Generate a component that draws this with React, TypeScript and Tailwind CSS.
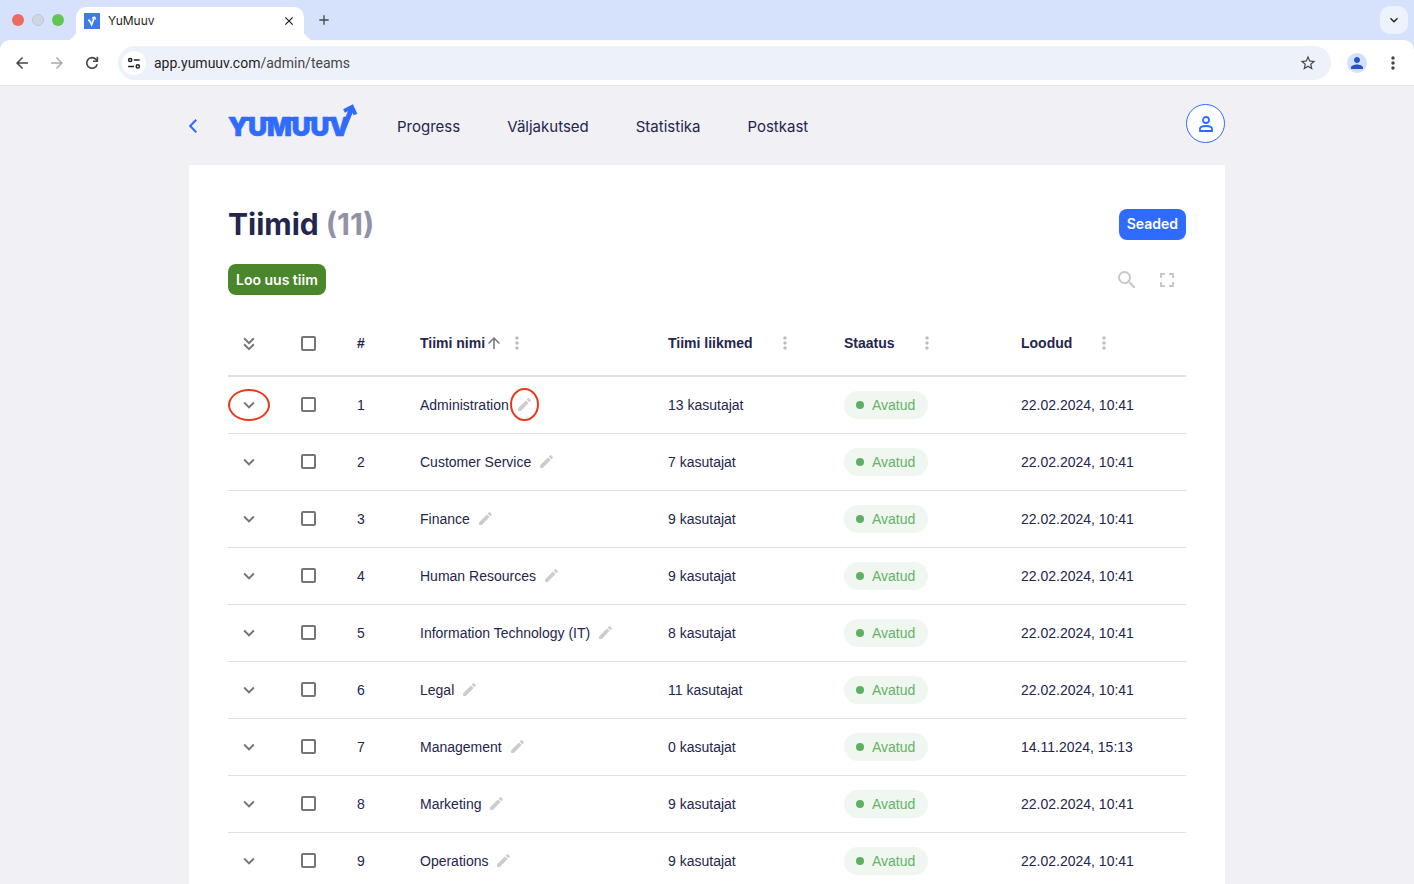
import type { ReactNode } from "react";
import { MdArrowBack, MdArrowForward, MdArrowUpward, MdAdd, MdClose, MdEdit, MdExpandMore, MdFullscreen, MdKeyboardDoubleArrowDown, MdMoreVert, MdPerson, MdSearch, MdStarBorder } from "react-icons/md";

type Team = { id: number; name: string; members: number; created: string };

const teams: Team[] = [
  { id: 1, name: "Administration", members: 13, created: "22.02.2024, 10:41" },
  { id: 2, name: "Customer Service", members: 7, created: "22.02.2024, 10:41" },
  { id: 3, name: "Finance", members: 9, created: "22.02.2024, 10:41" },
  { id: 4, name: "Human Resources", members: 9, created: "22.02.2024, 10:41" },
  { id: 5, name: "Information Technology (IT)", members: 8, created: "22.02.2024, 10:41" },
  { id: 6, name: "Legal", members: 11, created: "22.02.2024, 10:41" },
  { id: 7, name: "Management", members: 0, created: "14.11.2024, 15:13" },
  { id: 8, name: "Marketing", members: 9, created: "22.02.2024, 10:41" },
  { id: 9, name: "Operations", members: 9, created: "22.02.2024, 10:41" },
];

const navLinks = ["Progress", "Väljakutsed", "Statistika", "Postkast"];

function TuneIcon() {
  return (
    <svg viewBox="0 0 14 14" className="size-3.5" fill="none" stroke="currentColor" strokeWidth="1.5">
      <circle cx="3.2" cy="4" r="1.6" />
      <path d="M6.8 4H12.6M1.2 10.4H7" />
      <circle cx="10.8" cy="10.4" r="1.6" />
    </svg>
  );
}

function ReloadIcon() {
  return (
    <svg viewBox="0 0 18 18" className="size-[18px]" fill="none" stroke="currentColor" strokeWidth="1.6">
      <path d="M14.2 10.2A5.3 5.3 0 1 1 13 5.4L14.4 7" />
      <path d="M14.4 2.8V7.2H10" />
    </svg>
  );
}

function PersonIcon() {
  return (
    <svg viewBox="0 0 14 16" className="h-4 w-3.5" fill="none" stroke="currentColor" strokeWidth="1.8">
      <circle cx="7" cy="4" r="3" />
      <path d="M1 15V12.8C1 10.9 3.8 10 7 10S13 10.9 13 12.8V15Z" />
    </svg>
  );
}

function Favicon() {
  return (
    <svg viewBox="0 0 16 16" className="size-4">
      <rect width="16" height="16" fill="#3d7be6" />
      <path d="M4 7.4H5.4L7.6 11.6L10 5.4" fill="none" stroke="#fff" strokeWidth="1.7" />
      <path d="M8 5.2L10.6 4L11.8 6.6" fill="none" stroke="#fff" strokeWidth="1.3" />
    </svg>
  );
}

function Logo() {
  return (
    <svg viewBox="0 0 130 40" className="block h-10 w-[130px]" role="img" aria-label="YuMuuv">
      <text x="0" y="34" fontSize="26" fontWeight="900" fill="#2f6bff" stroke="#2f6bff" strokeWidth="0.6" className="font-['Inter',sans-serif]">YUMUUV</text>
      {/* bars that tie the letters together */}
      <path d="M14 17H22M35 17H42M59 17H66M79 17H86M98 17H105" stroke="#2f6bff" strokeWidth="4" />
      <path d="M115.5 26L124 6" stroke="#2f6bff" strokeWidth="5" />
      <path d="M116 9L124 5L127.5 12.5" fill="none" stroke="#2f6bff" strokeWidth="4" />
    </svg>
  );
}

function Browser({ children }: { children: ReactNode }) {
  return (
    <div className="flex h-screen flex-col overflow-hidden bg-[#d6e1fb] font-['Inter','Liberation_Sans',sans-serif]">
      {/* tab strip */}
      <div className="flex h-10 shrink-0 items-end pr-1.5 pl-3">
        <div className="flex h-10 w-16 shrink-0 items-center gap-2">
          <span className="size-3 rounded-full bg-[#ed6a5e]" />
          <span className="size-3 rounded-full border border-[#c0c6d4] bg-[#ced5e3]" />
          <span className="size-3 rounded-full bg-[#61c554]" />
        </div>
        <div className="relative flex h-[33px] w-[228px] items-center rounded-t-[10px] bg-white px-2 pb-1.5">
          <span className="absolute bottom-0 -left-2.5 size-2.5 rounded-br-[10px] shadow-[4px_4px_0_0_white]" />
          <span className="absolute -right-2.5 bottom-0 size-2.5 rounded-bl-[10px] shadow-[-4px_4px_0_0_white]" />
          <Favicon />
          <span className="ml-2 flex-1 text-xs text-[#1f1f1f]">YuMuuv</span>
          <button aria-label="Close tab" className="text-[#1f1f1f]"><MdClose className="size-3.5" /></button>
        </div>
        <button aria-label="New tab" className="mb-3 ml-3 text-[#444746]"><MdAdd className="size-4" /></button>
        <button aria-label="Search tabs" className="mb-1.5 ml-auto flex size-7 items-center justify-center rounded-[10px] bg-[#ecf3fd] text-[#1f1f1f]">
          <MdExpandMore className="size-4" />
        </button>
      </div>
      {/* toolbar */}
      <div className="flex h-[46px] shrink-0 items-center rounded-t-[10px] border-b border-[#e4e5e8] bg-white pr-[11px] pl-[13px]">
        <div className="flex gap-[17px] text-[#444746]">
          <button aria-label="Back"><MdArrowBack className="size-[18px]" /></button>
          <button aria-label="Forward" className="text-[#a9abad]"><MdArrowForward className="size-[18px]" /></button>
          <button aria-label="Reload"><ReloadIcon /></button>
        </div>
        <div className="ml-[17px] flex h-[34px] flex-1 items-center rounded-full bg-[#edf2fa] pr-3.5 pl-1">
          <span className="flex size-6 items-center justify-center rounded-full bg-white text-[#1f1f1f]"><TuneIcon /></span>
          <span className="mt-0.5 ml-2 flex-1 font-['Roboto',sans-serif] text-[14px] text-[#1f1f1f]">app.yumuuv.com<span className="text-[#474747]">/admin/teams</span></span>
          <button aria-label="Bookmark" className="text-[#444746]"><MdStarBorder className="size-[18px]" /></button>
        </div>
        <button aria-label="Profile" className="ml-4 flex size-5 items-center justify-center rounded-full bg-[#d3e0fb] text-[#2353c5]"><MdPerson className="size-[18px]" /></button>
        <button aria-label="Menu" className="ml-4 text-[#444746]"><MdMoreVert className="size-5" /></button>
      </div>
      {children}
    </div>
  );
}

function HeaderCell({ label, sorted }: { label: string; sorted?: boolean }) {
  return (
    <th scope="col" className="px-3 pb-0.5 text-left font-bold">
      <div className="flex items-center gap-1 whitespace-nowrap">
        <span className="flex items-center">
          {label}
          <span className="w-[18px] text-[#757575]">{sorted && <MdArrowUpward className="size-[18px]" />}</span>
        </span>
        <button aria-label={`${label} menu`} className="text-[#bdbdbd]"><MdMoreVert className="size-5" /></button>
      </div>
    </th>
  );
}

function Tick({ label }: { label: string }) {
  return <input type="checkbox" aria-label={label} className="mx-auto block size-[15px] appearance-none rounded-[2px] border-2 border-[#757575] bg-white" />;
}

function TeamRow({ team, marked }: { team: Team; marked?: boolean }) {
  return (
    <tr className="h-[57px] border-b border-[#e0e0e0]">
      <td>
        <button aria-label={`Open ${team.name}`} className="relative mx-auto flex items-center justify-center text-[#757575]">
          <MdExpandMore className="size-[22px]" />
          {marked && <span className="absolute -inset-x-2.5 -inset-y-[5px] rounded-[50%] border-2 border-[#e8391f]" />}
        </button>
      </td>
      <td><Tick label={team.name} /></td>
      <td className="px-2.5">{team.id}</td>
      <td className="px-3">
        <div className="flex items-center gap-[7px] whitespace-nowrap">
          {team.name}
          <button aria-label={`Edit ${team.name}`} className="relative text-[#cccccc]">
            <MdEdit className="size-[17px]" />
            {marked && <span className="absolute -inset-x-1.5 -inset-y-2 rounded-[50%] border-2 border-[#e8391f]" />}
          </button>
        </div>
      </td>
      <td className="px-3">{team.members} kasutajat</td>
      <td className="px-3">
        <span className="inline-flex h-7 items-center gap-2 rounded-full bg-[#eff7f0] pr-[13px] pl-3 align-middle text-[#66b266]">
          <span className="size-2 rounded-full bg-[#5fb062]" />
          Avatud
        </span>
      </td>
      <td className="px-3">{team.created}</td>
    </tr>
  );
}

export default function App() {
  return (
    <Browser>
      <div className="min-h-0 flex-1 overflow-hidden bg-[#f0f0f5]">
        <div className="mx-auto flex min-h-full max-w-[1036px] flex-col text-[#24264d]">
          {/* site header */}
          <header className="flex h-[79px] shrink-0 items-center">
            <a href="#" aria-label="Tagasi" className="w-[39px] text-[#2f6bff]">
              <svg viewBox="0 0 8 14" className="h-3.5 w-2" fill="none" stroke="currentColor" strokeWidth="2"><path d="M7.3 0.7L1.2 7L7.3 13.3" /></svg>
            </a>
            <a href="#" className="mb-2"><Logo /></a>
            <nav className="mt-1 ml-[39px] flex gap-[47px] text-[15px]">
              {navLinks.map(l => <a key={l} href="#">{l}</a>)}
            </nav>
            <button aria-label="Konto" className="mb-1 ml-auto flex size-[39px] items-center justify-center rounded-full border border-[#2f6bff] bg-white text-[#2f6bff]">
              <PersonIcon />
            </button>
          </header>

          <main className="flex-1 bg-white px-[39px] pt-[39px]">
            <div className="flex items-center justify-between">
              <h1 className="text-[30px] leading-10 font-bold">Tiimid <span className="text-[#9192a6]">(11)</span></h1>
              <button className="h-[31px] rounded-lg bg-[#2f6bff] px-2 text-sm font-semibold text-white">Seaded</button>
            </div>
            <div className="mt-5 flex items-center justify-between">
              <button className="h-[31px] rounded-lg bg-[#4a862b] px-2 text-sm font-semibold text-white">Loo uus tiim</button>
              <div className="mr-[7px] flex gap-4 text-[#c8c8c8]">
                <button aria-label="Otsi"><MdSearch className="size-6" /></button>
                <button aria-label="Täisekraan"><MdFullscreen className="size-6" /></button>
              </div>
            </div>

            <table className="mt-[17px] w-full table-fixed border-collapse font-['Liberation_Sans',sans-serif] text-sm">
              <colgroup>
                <col className="w-[42px]" />
                <col className="w-[77px]" />
                <col className="w-[61px]" />
                <col className="w-[248px]" />
                <col className="w-[176px]" />
                <col className="w-[177px]" />
                <col />
              </colgroup>
              <thead>
                <tr className="h-16 border-b-2 border-[#e0e0e0]">
                  <th>
                    <button aria-label="Open all" className="mx-auto block text-[#757575]"><MdKeyboardDoubleArrowDown className="size-[22px]" /></button>
                  </th>
                  <th><Tick label="Select all" /></th>
                  <th scope="col" className="px-2.5 pb-0.5 text-left font-bold">#</th>
                  <HeaderCell label="Tiimi nimi" sorted />
                  <HeaderCell label="Tiimi liikmed" />
                  <HeaderCell label="Staatus" />
                  <HeaderCell label="Loodud" />
                </tr>
              </thead>
              <tbody>
                {teams.map(t => <TeamRow key={t.id} team={t} marked={t.id === 1} />)}
              </tbody>
            </table>
          </main>
        </div>
      </div>
    </Browser>
  );
}
